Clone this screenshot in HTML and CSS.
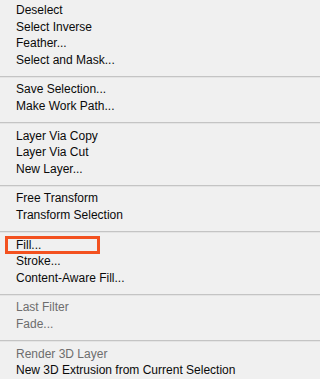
FILE: index.html
```html
<!DOCTYPE html>
<html>
<head>
<meta charset="utf-8">
<link rel="stylesheet" href="styles.css">
</head>
<body>
<div class="menu">
  <div class="item">Deselect</div>
  <div class="item">Select Inverse</div>
  <div class="item">Feather...</div>
  <div class="item">Select and Mask...</div>
  <div class="sep"></div>
  <div class="item">Save Selection...</div>
  <div class="item">Make Work Path...</div>
  <div class="sep"></div>
  <div class="item">Layer Via Copy</div>
  <div class="item">Layer Via Cut</div>
  <div class="item">New Layer...</div>
  <div class="sep"></div>
  <div class="item">Free Transform</div>
  <div class="item">Transform Selection</div>
  <div class="sep"></div>
  <div class="item highlighted">Fill...<span class="callout"></span></div>
  <div class="item">Stroke...</div>
  <div class="item">Content-Aware Fill...</div>
  <div class="sep"></div>
  <div class="item disabled">Last Filter</div>
  <div class="item disabled">Fade...</div>
  <div class="sep"></div>
  <div class="item disabled">Render 3D Layer</div>
  <div class="item">New 3D Extrusion from Current Selection</div>
</div>
</body>
</html>
```
FILE: styles.css
```css
html, body {
  margin: 0;
  padding: 0;
  background: #f0f0f0;
}
.menu {
  display: flex;
  flex-direction: column;
  padding-top: 2px;
  font-family: "Liberation Sans", Arial, sans-serif;
  font-size: 12px;
  color: #0a0a0a;
}
.item {
  position: relative;
  height: 16.6px;
  line-height: 16.6px;
  padding-left: 16px;
  white-space: nowrap;
}
.item.disabled {
  color: #6d6d6d;
}
.sep {
  height: 0;
  border-top: 1px solid #c4c4c4;
  border-bottom: 1px solid #e4e4e4;
  margin: 7.5px 0 3.5px;
}
.callout {
  position: absolute;
  left: 5px;
  top: -1px;
  width: 89px;
  height: 12px;
  border: 3px solid #f3511f;
}
```
